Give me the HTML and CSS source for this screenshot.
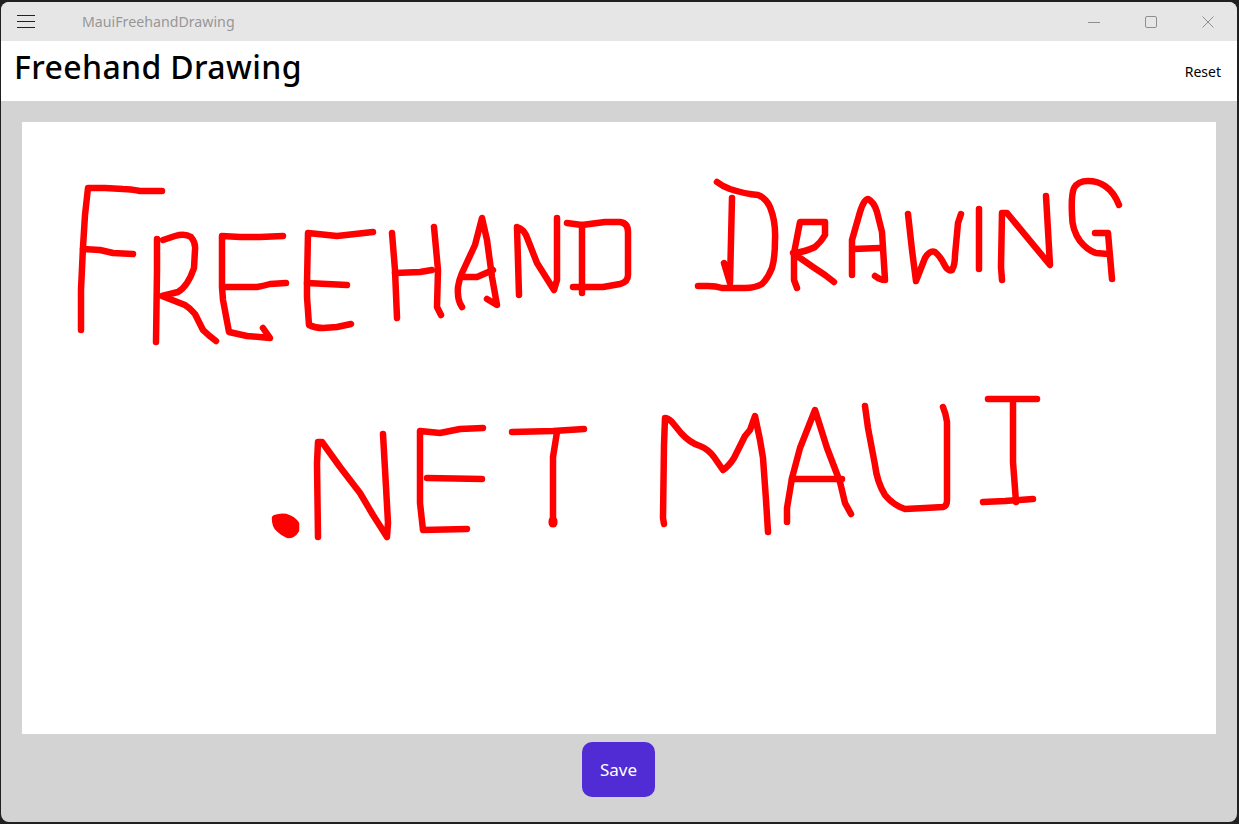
FILE: index.html
```html
<!DOCTYPE html>
<html lang="en">
<head>
<meta charset="utf-8">
<title>MauiFreehandDrawing</title>
<link rel="stylesheet" href="styles.css">
</head>
<body>
<div class="window">
  <div class="titlebar">
    <div class="menu-icon"><svg width="18" height="13" viewBox="0 0 18 13"><path d="M0 .5H18M0 6.5H18M0 12.5H18" stroke="#222" stroke-width="1" fill="none"/></svg></div>
    <span class="app-name">MauiFreehandDrawing</span>
    <div class="caption">
      <svg class="cap-btn" width="12" height="12" viewBox="0 0 12 12"><path d="M0 6.5H12" stroke="#8f8f8f" stroke-width="1" fill="none"/></svg>
      <svg class="cap-btn" width="12" height="12" viewBox="0 0 12 12"><rect x=".5" y=".5" width="11" height="11" rx="1.5" stroke="#8f8f8f" stroke-width="1" fill="none"/></svg>
      <svg class="cap-btn" width="12" height="12" viewBox="0 0 12 12"><path d="M.5 .5L11.5 11.5M11.5 .5L.5 11.5" stroke="#8f8f8f" stroke-width="1" fill="none"/></svg>
    </div>
  </div>
  <header class="header">
    <h1 class="page-title">Freehand Drawing</h1>
    <span class="reset">Reset</span>
  </header>
  <main class="content">
    <div class="canvas">
      <svg class="drawing" viewBox="22 122 1194 612" width="1194" height="612">
        <g class="ink">
          <!-- Freehand -->
          <path d="M162 191L140 191Q130 189 123 189L105 188L88 188L85 215L83 247L81 290L81 330"/>
          <path d="M83 249L100 250L113 253L133 254"/>
          <path d="M157 239L157 270L156 342"/>
          <path d="M163 240L175 236Q185 233 191 237Q196 243 195 250L194 268Q191 277 187 283Q183 289 178 292L162 296L185 305Q190 308 195 314L203 330Q208 335 216 341"/>
          <path d="M283 236L260 237L240 237L222 236L222 287L223 300L229 332L247 336L270 338L263 328"/>
          <path d="M226 287L257 287Q263 286 270 284L286 283"/>
          <path d="M373 232L337 236L308 233L307 283L307 297L309 325Q315 328 323 328L337 327L351 324"/>
          <path d="M307 283L347 285"/>
          <path d="M392 233L395 270L397 318"/>
          <path d="M395 273L420 272L432 270"/>
          <path d="M434 227L438 270L437 307L441 315"/>
          <path d="M462 307Q457 300 458 287Q459 280 462 273L475 245L482 218L487 240L492 277L497 305L487 299"/>
          <path d="M462 277L477 277L493 270"/>
          <path d="M519 295L517 227Q523 229 526 235L537 263L554 290L557 280L557 218"/>
          <path d="M567 223L582 225L605 222L620 222Q628 223 628 232L628 275Q628 282 620 284L603 287L573 287"/>
          <path d="M582 225L582 293"/>
          <!-- Drawing -->
          <path d="M717 182Q722 186 730 189Q745 194 758 195Q766 198 770 207Q776 222 775 240Q775 258 772 268Q768 278 762 284Q755 288 745 288L722 288Q716 286 708 286L698 286"/>
          <path d="M732 198L730 283L724 263"/>
          <path d="M797 288L794 280L794 253L800 222L825 222L825 235Q821 242 815 247Q805 252 793 253L813 267L825 275L834 282"/>
          <path d="M852 275L852 240L860 212Q864 199 868 199Q874 202 877 212L882 232L885 280Q880 280 875 276"/>
          <path d="M853 249L880 248"/>
          <path d="M908 214L912 250L916 281L925 258Q930 250 935 252Q940 256 944 264Q948 272 952 270Q955 265 955 255L958 223L961 214"/>
          <path d="M979 209L979 269"/>
          <path d="M1002 280L1001 267L1002 213L1007 213L1050 265L1046 196"/>
          <path d="M1119 205Q1114 192 1105 186Q1098 181 1088 181Q1078 181 1074 188Q1071 195 1072 215Q1072 230 1080 241Q1087 250 1096 253L1108 254"/>
          <path d="M1095 233L1108 233L1112 279"/>
          <!-- .NET -->
          <path class="blob" d="M275 518Q281 516 286 517Q293 519 296 524L296 530Q293 535 288 535Q283 533 279 529Q275 526 275 518Z"/>
          <path d="M318 537L317 463L318 442L322 442L340 467L360 493L373 515L387 537L388 523L386 487L383 434"/>
          <path d="M483 428L460 429L440 433L420 431L420 503L423 530L467 529"/>
          <path d="M427 478L482 479"/>
          <path d="M512 432L553 431L584 429"/>
          <path d="M557 432L553 457L553 523"/>
          <path class="thick" d="M553 521L553 523"/>
          <!-- MAUI -->
          <path d="M664 524L663 518L664 445L665 418Q668 418 672 422L681 433Q690 443 700 446Q708 449 714 457L723 470Q729 466 734 458L745 436L750 430L755 416L760 440L763 458L766 500L768 532"/>
          <path d="M787 522L787 508L792 478L800 448L815 410L827 448L840 482L845 503L851 514"/>
          <path d="M792 479L842 479"/>
          <path d="M865 406L868 428L875 465Q877 482 885 495Q893 505 905 509L925 508L943 507Q947 506 947 500L947 422Q946 414 943 407"/>
          <path d="M988 399L1037 399"/>
          <path d="M1013 403L1013 462L1016 502"/>
          <path d="M983 502L1005 501L1033 499"/>
        </g>
      </svg>
    </div>
    <button class="save" type="button">Save</button>
  </main>
</div>
</body>
</html>
```
FILE: styles.css
```css
* { box-sizing: border-box; }
html, body { height: 100%; }
body {
  margin: 0;
  background: #202020;
  padding: 2px 2px 2px 1px;
  font-family: "Noto Sans", "Open Sans", sans-serif;
  overflow: hidden;
}
.window {
  height: 100%;
  display: flex;
  flex-direction: column;
  border-radius: 8px;
  overflow: hidden;
  background: #d3d3d3;
}
.titlebar {
  height: 39px;
  flex: none;
  display: flex;
  align-items: center;
  background: #e6e6e6;
  padding-left: 16px;
}
.menu-icon { width: 18px; height: 13px; display: flex; }
.app-name {
  margin-left: 47px;
  font-size: 14.2px;
  color: #979797;
}
.caption {
  margin-left: auto;
  display: flex;
  gap: 45px;
  padding-right: 23px;
}
.cap-btn { display: block; }
.header {
  height: 60px;
  flex: none;
  background: #fff;
  display: flex;
  align-items: center;
  justify-content: space-between;
  padding: 0 16px 0 13px;
}
.page-title {
  margin: 0;
  font-size: 32px;
  font-weight: 500;
  letter-spacing: .36px;
  color: #000;
  line-height: 50px;
  padding-bottom: 8px;
}
.reset { font-size: 14px; color: #000; padding-top: 1px; }
.content {
  flex: 1;
  display: flex;
  flex-direction: column;
  align-items: center;
  padding: 21px 21px 0;
}
.canvas {
  width: 1194px;
  height: 612px;
  flex: none;
  background: #fff;
}
.drawing { display: block; }
.ink {
  fill: none;
  stroke: #ff0000;
  stroke-width: 6.5;
  stroke-linecap: round;
  stroke-linejoin: round;
}
.ink .blob { fill: #ff0000; }
.ink .thick { stroke-width: 9; }
.save {
  margin: 8px 1px 0 0;
  width: 73px;
  height: 55px;
  border: 0;
  border-radius: 10px;
  background: #512bd4;
  color: #fff;
  font: 17px "Noto Sans", "Open Sans", sans-serif;
  padding: 0;
}
```
